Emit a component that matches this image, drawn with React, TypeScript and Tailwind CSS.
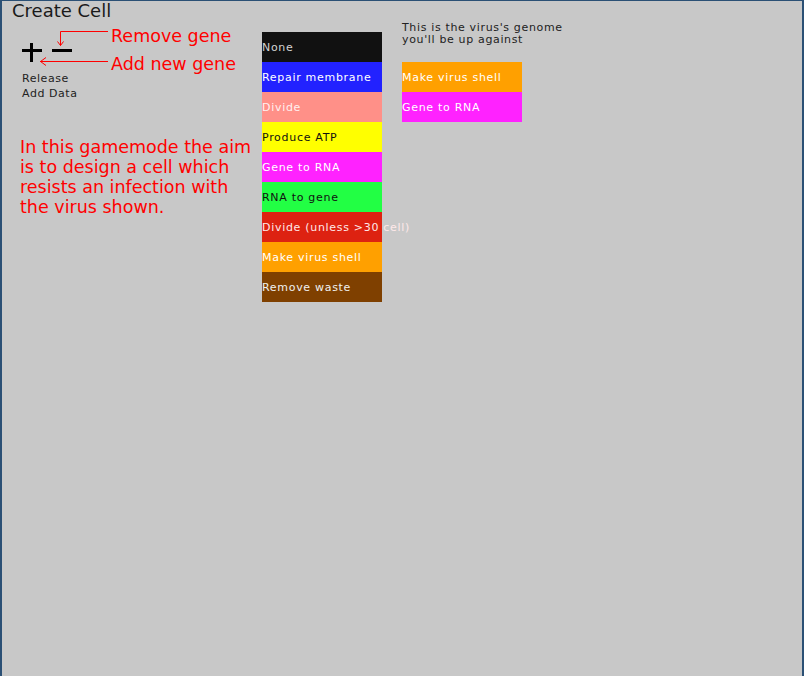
const genes = [
  { name: "None", bg: "bg-[#111111]", fg: "text-[#d4d4d4]" },
  { name: "Repair membrane", bg: "bg-[#2222ff]", fg: "text-white" },
  { name: "Divide", bg: "bg-[#ff9088]", fg: "text-[#fff0f0]" },
  { name: "Produce ATP", bg: "bg-[#ffff00]", fg: "text-[#111111]" },
  { name: "Gene to RNA", bg: "bg-[#ff22ff]", fg: "text-white" },
  { name: "RNA to gene", bg: "bg-[#22ff44]", fg: "text-[#111111]" },
  { name: "Divide (unless >30 cell)", bg: "bg-[#dd2211]", fg: "text-[#ffe8e8]" },
  { name: "Make virus shell", bg: "bg-[#ffa000]", fg: "text-white" },
  { name: "Remove waste", bg: "bg-[#7f4000]", fg: "text-[#f0f0f0]" },
];

const virusGenome = [
  { name: "Make virus shell", bg: "bg-[#ffa000]", fg: "text-white" },
  { name: "Gene to RNA", bg: "bg-[#ff22ff]", fg: "text-white" },
];

function GeneBox({ name, bg, fg }: { name: string; bg: string; fg: string }) {
  return (
    <div
      className={`flex h-[30px] w-[120px] items-center whitespace-nowrap pt-[2px] text-[11px] leading-[12px] tracking-[0.7px] ${bg} ${fg}`}
    >
      {name}
    </div>
  );
}

function EditIcons() {
  return (
    <svg width="91" height="50" viewBox="0 0 91 50" className="shrink-0">
      {/* plus */}
      <rect x="2" y="28" width="20" height="3" fill="#000" />
      <rect x="10" y="22" width="3" height="19" fill="#000" />
      {/* minus */}
      <rect x="32" y="28" width="20" height="3" fill="#000" />
      {/* remove arrow */}
      <path d="M88 10.5 H40.5 V24.5" fill="none" stroke="#ff0000" strokeWidth="1" />
      <path d="M37.5 20.5 L40.5 24.5 L43.5 20.5" fill="none" stroke="#ff0000" strokeWidth="1" />
      {/* add arrow */}
      <path d="M88 40.5 H20" fill="none" stroke="#ff0000" strokeWidth="1" />
      <path d="M26 36.5 L20.5 40.5 L26 44.5" fill="none" stroke="#ff0000" strokeWidth="1" />
    </svg>
  );
}

export default function App() {
  return (
    <div
      className="flex h-[676px] w-[804px] overflow-hidden border-x-2 border-t border-[#2b5075] bg-[#c8c8c8]"
      style={{ fontFamily: '"DejaVu Sans", sans-serif' }}
    >
      {/* left column */}
      <div className="flex w-[260px] shrink-0 flex-col">
        <div className="pl-[10px] text-[18px] leading-[20px] text-[#1a1a1a]">
          Create Cell
        </div>
        <div className="ml-[18px] flex h-[50px]">
          <EditIcons />
          <div className="flex flex-col gap-[10px] pt-[6px] text-[17.5px] leading-[18px] text-[#ff0000] whitespace-nowrap">
            <span>Remove gene</span>
            <span>Add new gene</span>
          </div>
        </div>
        <div className="ml-[20px] text-[11px] leading-[15px] tracking-[0.55px] text-[#222222]">
          <div>Release</div>
          <div>Add Data</div>
        </div>
        <p className="ml-[18px] mt-[36px] text-[17.5px] leading-[20px] text-[#ff0000] whitespace-nowrap">
          In this gamemode the aim
          <br />
          is to design a cell which
          <br />
          resists an infection with
          <br />
          the virus shown.
        </p>
      </div>

      {/* gene list */}
      <div className="flex w-[120px] shrink-0 flex-col pt-[31px]">
        {genes.map((g) => (
          <GeneBox key={g.name} {...g} />
        ))}
      </div>

      {/* virus genome */}
      <div className="ml-[20px] flex flex-col pt-[21px]">
        <div className="text-[11px] leading-[12px] tracking-[0.65px] text-[#222222]">
          This is the virus's genome
          <br />
          you'll be up against
        </div>
        <div className="mt-[16px] flex flex-col">
          {virusGenome.map((g) => (
            <GeneBox key={g.name} {...g} />
          ))}
        </div>
      </div>
    </div>
  );
}
